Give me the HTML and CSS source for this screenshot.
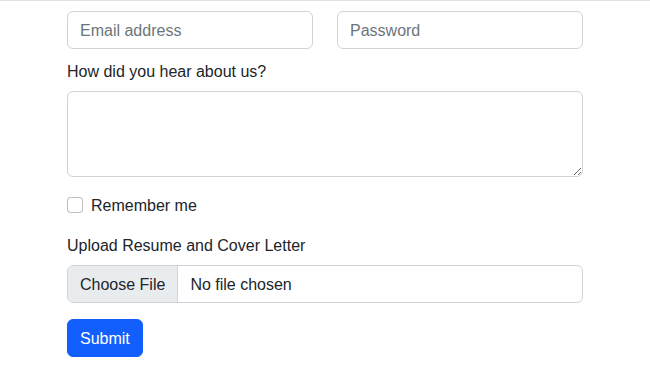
FILE: index.html
```html
<!DOCTYPE html>
<html lang="en">
<head>
<meta charset="utf-8">
<title>Sign up</title>
<link rel="stylesheet" href="styles.css">
</head>
<body>
<div class="page">
  <form class="signup">
    <div class="pair">
      <input class="field" type="email" placeholder="Email address">
      <input class="field" type="password" placeholder="Password">
    </div>
    <div class="group first">
      <label class="label" for="hear">How did you hear about us?</label>
      <textarea class="field area" id="hear" rows="3"></textarea>
    </div>
    <div class="check">
      <input class="box" type="checkbox" id="remember">
      <label class="check-label" for="remember">Remember me</label>
    </div>
    <div class="group">
      <span class="label">Upload Resume and Cover Letter</span>
      <label class="file">
        <input class="file-input" type="file">
        <span class="file-btn">Choose File</span>
        <span class="file-name">No file chosen</span>
      </label>
    </div>
    <button class="submit" type="button">Submit</button>
  </form>
</div>
</body>
</html>
```

FILE: styles.css
```css
html, body {
  margin: 0;
  padding: 0;
  background: #ffffff;
}

body {
  border-top: 1px solid #dee2e6;
  font-family: "Liberation Sans", Arial, sans-serif;
  font-size: 16px;
  line-height: 24px;
  color: #212529;
}

.page {
  padding: 10px 0 0 67px;
}

.signup {
  width: 516px;
  display: flex;
  flex-direction: column;
}

.pair {
  display: grid;
  grid-template-columns: 1fr 1fr;
  column-gap: 24px;
}

.field {
  box-sizing: border-box;
  display: block;
  width: 100%;
  height: 38px;
  margin: 0;
  padding: 7px 12px 5px;
  font-family: inherit;
  font-size: 16px;
  line-height: 24px;
  color: #212529;
  background: #ffffff;
  border: 1px solid #ced4da;
  border-radius: 6px;
  outline: none;
}

.field::placeholder {
  color: #6c757d;
  opacity: 1;
}

.area {
  height: 86px;
  resize: vertical;
}

.group {
  margin-top: 16px;
  display: flex;
  flex-direction: column;
}

.group.first {
  margin-top: 10px;
}

.label {
  display: block;
  padding-top: 1px;
  margin-bottom: 7px;
}

.check {
  margin-top: 16px;
  display: flex;
  align-items: center;
  height: 24px;
}

.check-label {
  padding-top: 1px;
}

.box {
  appearance: none;
  -webkit-appearance: none;
  box-sizing: border-box;
  width: 16px;
  height: 16px;
  margin: 0 8px 0 0;
  border: 1px solid rgba(0, 0, 0, 0.25);
  border-radius: 4px;
  background: #ffffff;
}

.file {
  box-sizing: border-box;
  display: flex;
  height: 38px;
  border: 1px solid #ced4da;
  border-radius: 6px;
  overflow: hidden;
}

.file-input {
  position: absolute;
  width: 1px;
  height: 1px;
  opacity: 0;
  overflow: hidden;
}

.file-btn {
  padding: 7px 12px 5px;
  background: #e9ecef;
  border-right: 1px solid #ced4da;
}

.file-name {
  padding: 7px 12px 5px;
}

.submit {
  align-self: flex-start;
  margin-top: 16px;
  box-sizing: border-box;
  height: 38px;
  padding: 7px 12px 5px;
  font-family: inherit;
  font-size: 16px;
  line-height: 24px;
  color: #ffffff;
  background: #135ffe;
  border: 1px solid #135ffe;
  border-radius: 6px;
}
```
